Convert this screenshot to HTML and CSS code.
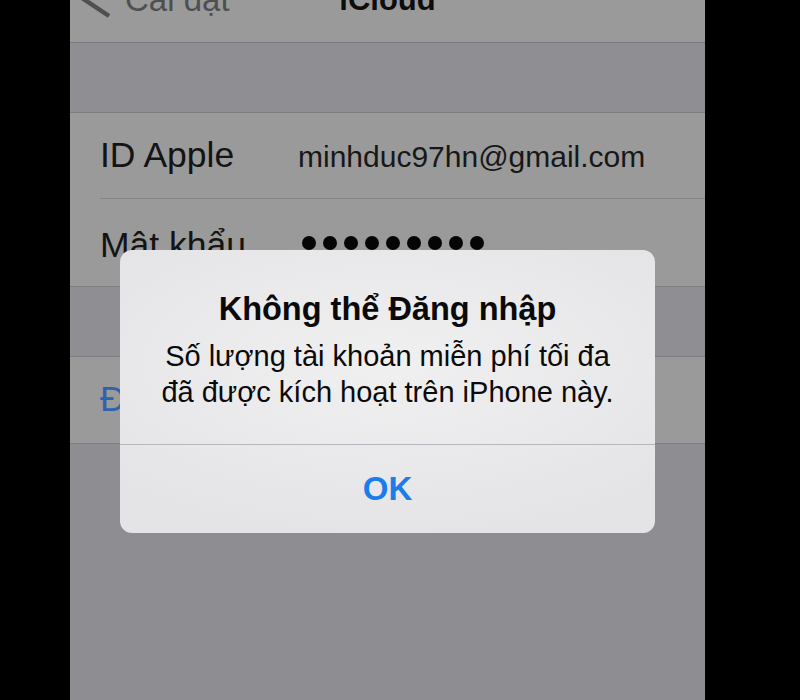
FILE: index.html
```html
<!DOCTYPE html>
<html lang="vi">
<head>
<meta charset="utf-8">
<title>iCloud</title>
<link rel="stylesheet" href="styles.css">
</head>
<body>
<div class="screen">
  <header class="nav">
    <div class="nav-row">
      <div class="back">
        <svg class="chev" width="36" height="46" viewBox="0 0 36 46"><path d="M33 2 L3 22 L33 42" fill="none" stroke="#4f4f4f" stroke-width="4.5"/></svg>
        <span class="back-text">Cài đặt</span>
      </div>
      <div class="title">iCloud</div>
      <div></div>
    </div>
  </header>
  <div class="gap"></div>
  <section class="group">
    <div class="row">
      <span class="label">ID Apple</span>
      <span class="value">minhduc97hn@gmail.com</span>
    </div>
    <div class="row row-pass">
      <span class="label">Mật khẩu</span>
      <span class="dots"><i></i><i></i><i></i><i></i><i></i><i></i><i></i><i></i><i></i></span>
    </div>
  </section>
  <div class="gap"></div>
  <section class="group">
    <div class="row">
      <span class="label link">Đăng nhập</span>
    </div>
  </section>
  <div class="rest"></div>

  <div class="alert">
    <div class="alert-body">
      <div class="alert-title">Không thể Đăng nhập</div>
      <div class="alert-msg">Số lượng tài khoản miễn phí tối đa<br>đã được kích hoạt trên iPhone này.</div>
    </div>
    <div class="alert-btn">OK</div>
  </div>
</div>
</body>
</html>
```
FILE: styles.css
```css
html, body {
  margin: 0;
  padding: 0;
  background: #000;
  width: 800px;
  height: 700px;
  overflow: hidden;
}
body {
  font-family: "Liberation Sans", Arial, sans-serif;
}
.screen {
  position: relative;
  margin-left: 70px;
  width: 635px;
  height: 700px;
  background: #8e8d92;
  overflow: hidden;
}
.nav {
  height: 42px;
  background: #9a9a9a;
  border-bottom: 1px solid #7b7b7f;
  overflow: hidden;
}
.nav-row {
  display: grid;
  grid-template-columns: 1fr auto 1fr;
  align-items: start;
  margin-top: -26px;
}
.back {
  display: flex;
  align-items: flex-start;
  padding-left: 6px;
}
.chev {
  display: block;
  flex: none;
}
.back-text {
  margin-left: 13px;
  margin-top: 8px;
  font-size: 33px;
  line-height: 36px;
  color: #4f4f4f;
}
.title {
  margin-top: 8px;
  font-size: 31px;
  line-height: 36px;
  font-weight: bold;
  color: #0d0d0d;
}
.gap {
  height: 69px;
  background: #8f8e93;
}
.group {
  background: #9a9a9a;
  border-top: 1px solid #7d7d81;
  border-bottom: 1px solid #7d7d81;
}
.row {
  display: flex;
  align-items: baseline;
  margin-left: 30px;
  height: 86px;
  box-sizing: border-box;
  padding-top: 22px;
  border-bottom: 1px solid #848487;
}
.row:last-child {
  border-bottom: none;
}
.row-pass {
  height: 87px;
  padding-top: 26px;
}
.label {
  width: 198px;
  flex: none;
  font-size: 35.5px;
  line-height: 40px;
  color: #141414;
}
.link {
  color: #2e62ad;
}
.value {
  font-size: 30px;
  line-height: 40px;
  color: #171717;
}
.dots {
  display: flex;
  gap: 7px;
  padding-left: 4px;
  align-self: flex-start;
  margin-top: 11px;
}
.dots i {
  display: block;
  width: 14px;
  height: 14px;
  border-radius: 50%;
  background: #050505;
}
.rest {
  height: 300px;
}
.alert {
  position: absolute;
  left: 50px;
  top: 250px;
  width: 535px;
  height: 283px;
  border-radius: 12px;
  overflow: hidden;
  background: radial-gradient(ellipse 70% 60% at 50% 40%, #f0f0f1 0%, #e8e8ea 70%, #e4e4e6 100%);
  display: flex;
  flex-direction: column;
  text-align: center;
  color: #0a0a0a;
}
.alert-body {
  height: 195px;
  box-sizing: border-box;
  padding-top: 40px;
  border-bottom: 1px solid #b7b7bb;
}
.alert-title {
  font-size: 32.5px;
  line-height: 38px;
  font-weight: bold;
}
.alert-msg {
  margin-top: 10px;
  font-size: 29px;
  line-height: 36px;
}
.alert-btn {
  flex: 1;
  display: flex;
  align-items: center;
  justify-content: center;
  font-size: 33px;
  font-weight: bold;
  color: #1a7de9;
}
```
